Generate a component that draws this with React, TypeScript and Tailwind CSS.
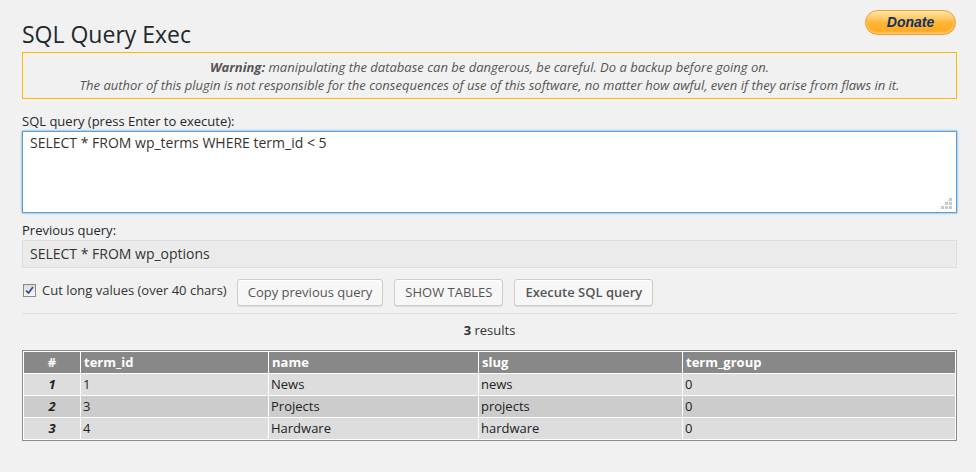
import { useState } from 'react';

const rows = [
  { id: '1', name: 'News', slug: 'news', group: '0' },
  { id: '3', name: 'Projects', slug: 'projects', group: '0' },
  { id: '4', name: 'Hardware', slug: 'hardware', group: '0' },
];

const btn =
  'h-[27px] px-[10px] rounded-[3px] border border-[#cccccc] bg-[#f7f7f7] text-[13px] text-[#555555] shadow-[inset_0_1px_0_#ffffff,0_1px_0_rgba(0,0,0,0.08)]';

const DonateButton = () => (
  <span className="flex h-[25px] w-[91px] items-center justify-center rounded-full border border-[#f0a030] bg-gradient-to-b from-[#ffe7a8] via-[#ffb733] to-[#ffa41c] shadow-[inset_0_-2px_2px_rgba(255,220,150,0.6)]">
    <span className="font-['Liberation_Sans',Arial,sans-serif] text-[14px] font-bold italic text-[#0e3168]">Donate</span>
  </span>
);

const CheckBox = () => (
  <span className="flex h-[13px] w-[13px] items-center justify-center border border-[#8a8a8a] bg-gradient-to-b from-[#dcdcdc] to-[#f8f8f8]">
    <svg width="9" height="9" viewBox="0 0 9 9">
      <path d="M1 4.5 L3.5 7 L8 1" fill="none" stroke="#2a4a9a" strokeWidth="1.7" />
    </svg>
  </span>
);

// little dotted resize grip drawn over the textarea corner
const Grip = () => (
  <svg className="pointer-events-none absolute bottom-[4px] right-[5px]" width="11" height="11" viewBox="0 0 11 11">
    {[
      [8, 0],
      [8, 4],
      [4, 4],
      [8, 8],
      [4, 8],
      [0, 8],
    ].map(([x, y]) => (
      <rect key={`${x}-${y}`} x={x} y={y} width="3" height="3" fill="#c8c8c8" />
    ))}
  </svg>
);

const App = () => {
  const [query, setQuery] = useState('SELECT * FROM wp_terms WHERE term_id < 5');

  return (
    <div className="min-h-[472px] bg-[#f1f1f1] pl-[22px] pr-[19px] pt-[10px] font-['Open_Sans',sans-serif] text-[13px] text-[#444444]">
      <div className="flex items-start justify-between">
        <h2 className="mt-[10px] text-[23px] leading-[29px] text-[#23282d]">SQL Query Exec</h2>
        <div className="mr-[1px]">
          <DonateButton />
        </div>
      </div>

      <div className="mt-[3px] border border-[#ffb900] pt-[5px] pb-[4px] text-center italic leading-[18px] text-[#555555]">
        <div>
          <b>Warning:</b> manipulating the database can be dangerous, be careful. Do a backup before going on.
        </div>
        <div>
          The author of this plugin is not responsible for the consequences of use of this software, no matter how awful, even if they arise from flaws in it.
        </div>
      </div>

      <div className="mt-[13px] leading-[18px] text-[#23282d]">SQL query (press Enter to execute):</div>
      <div className="relative mt-[1px]">
        <textarea
          value={query}
          onChange={(e) => setQuery(e.target.value)}
          className="block h-[82px] w-full resize-none border border-[#5b9dd9] bg-white px-[7px] py-[2px] text-[14px] leading-[18px] text-[#333333] shadow-[0_0_2px_rgba(30,140,190,0.8)] outline-none"
        />
        <Grip />
      </div>

      <div className="mt-[8px] leading-[18px] text-[#23282d]">Previous query:</div>
      <div className="mt-[1px] h-[28px] border border-[#dddddd] bg-[#ebebeb] px-[7px] text-[14px] leading-[26px] text-[#333333]">
        SELECT * FROM wp_options
      </div>

      <div className="mt-[11px] flex items-center">
        <label className="flex items-center gap-[6px] pl-[1px] pb-[4px]">
          <CheckBox />
          <span className="text-[13px] text-[#333333]">Cut long values (over 40 chars)</span>
        </label>
        <button className={`${btn} ml-[10px]`}>Copy previous query</button>
        <button className={`${btn} ml-[11px]`}>SHOW TABLES</button>
        <button className={`${btn} ml-[11px] font-semibold`}>Execute SQL query</button>
      </div>

      <div className="mt-[7px] h-px bg-[#dddddd]" />

      <div className="mt-[7px] text-center leading-[18px] text-[#333333]">
        <b>3</b> results
      </div>

      <table className="mt-[11px] w-full border-separate border-spacing-[1px] border border-[#8a8a8a] bg-white text-[13px] text-[#222222]">
        <thead>
          <tr className="h-[21px] bg-[#888888] text-left font-bold text-white">
            <th className="w-[56px] text-center">#</th>
            <th className="w-[187px] px-[3px]">term_id</th>
            <th className="w-[209px] px-[3px]">name</th>
            <th className="w-[203px] px-[3px]">slug</th>
            <th className="px-[3px]">term_group</th>
          </tr>
        </thead>
        <tbody>
          {rows.map((r, i) => (
            <tr key={r.id} className={`h-[21px] ${i % 2 === 1 ? 'bg-[#cccccc]' : 'bg-[#dddddd]'}`}>
              <td className="text-center font-bold italic">{i + 1}</td>
              <td className="px-[2px]">{r.id}</td>
              <td className="px-[2px]">{r.name}</td>
              <td className="px-[2px]">{r.slug}</td>
              <td className="px-[2px]">{r.group}</td>
            </tr>
          ))}
        </tbody>
      </table>
    </div>
  );
};

export default App;
